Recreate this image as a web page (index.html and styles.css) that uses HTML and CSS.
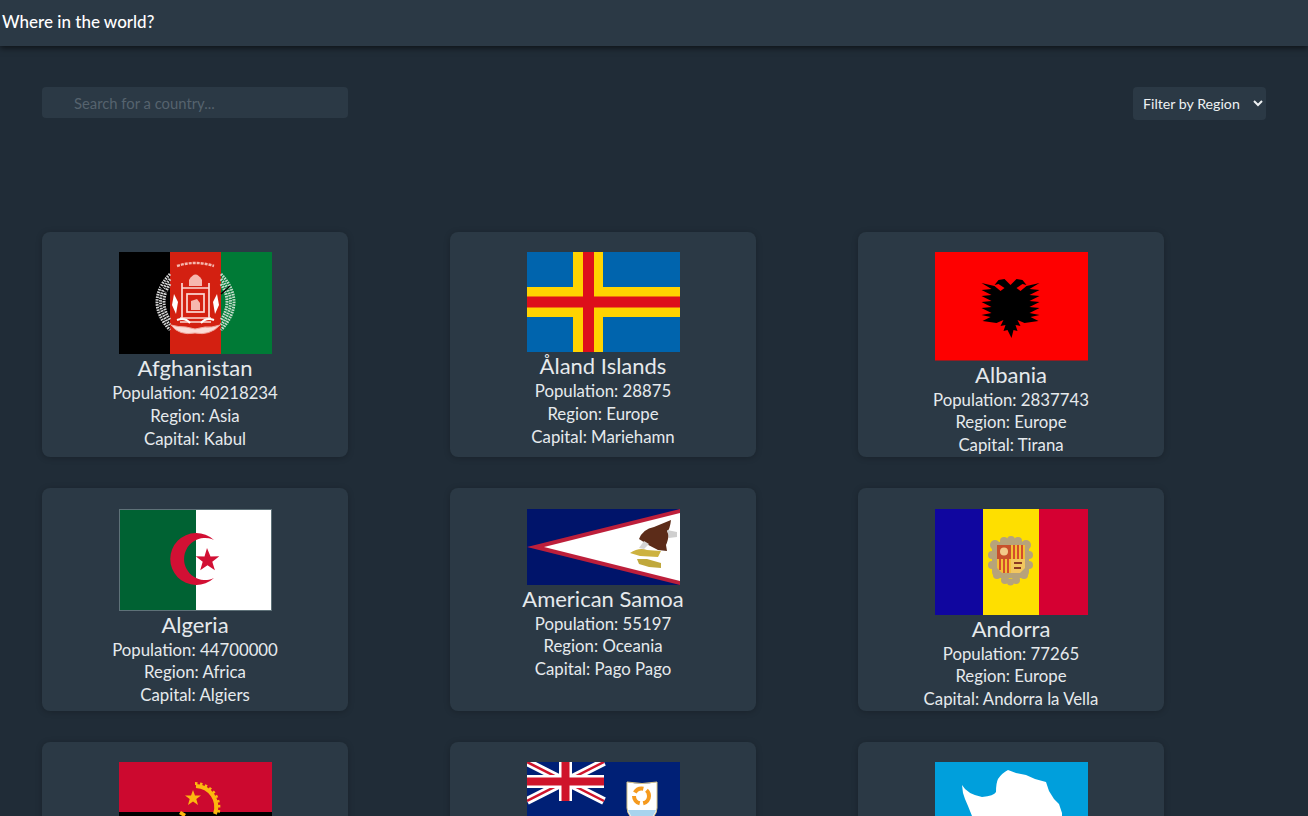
FILE: index.html
```html
<!DOCTYPE html>
<html lang="en">
<head>
    <meta charset="UTF-8">
    <meta name="viewport" content="width=device-width, initial-scale=1.0">
    <title>Where in the world?</title>
    <link rel="stylesheet" href="styles.css">
</head>
<body>
    <header class="topbar">
        <h1>Where in the world?</h1>
    </header>

    <main class="page">
        <div class="controls">
            <input class="search" type="text" placeholder="Search for a country...">
            <select class="region">
                <option>Filter by Region</option>
                <option>Africa</option>
                <option>Americas</option>
                <option>Asia</option>
                <option>Europe</option>
                <option>Oceania</option>
            </select>
        </div>

        <section class="countries">
            <article class="card">
                <svg class="flag" viewBox="0 0 153 102">
                    <rect width="51" height="102" fill="#000"/>
                    <rect x="51" width="51" height="102" fill="#d32011"/>
                    <rect x="102" width="51" height="102" fill="#007a36"/>
                    <g fill="none" stroke-width="3" stroke-dasharray="1.6 1">
                        <g stroke="#d6d6d6">
                            <path d="M51 22Q25 50 51 78"/>
                            <path d="M51 27Q32 50 51 73"/>
                            <path d="M51 32Q39 50 51 68"/>
                        </g>
                        <g stroke="#c3dccb">
                            <path d="M102 22Q128 50 102 78"/>
                            <path d="M102 27Q121 50 102 73"/>
                            <path d="M102 32Q114 50 102 68"/>
                        </g>
                    </g>
                    <path d="M41 34l9 8M111 34l-9 8" stroke="#000" stroke-width="1.500"/>
                    <path d="M58 14q18-6 37 0" fill="none" stroke="#f6b7ae" stroke-width="2.400" stroke-dasharray="3 1"/>
                    <path d="M70 28q6.500-11 13 0v6H70z" fill="#f6b7ae"/>
                    <g fill="none" stroke="#fbd9d4" stroke-width="1.700">
                        <path d="M63 66V31M90 66V31M63 36h27"/>
                        <rect x="68" y="42" width="17" height="18"/>
                        <path d="M61 66h31M61 70h31"/>
                    </g>
                    <path d="M55 42l4 8-2 12-4-9zM98 42l-4 8 2 12 4-9z" fill="#fff"/>
                    <path d="M72 58v-9l6-2 3 4v7z" fill="#f6b7ae"/>
                    <path d="M52 73q8 11 24 8 15 3 25-8-9 3-15 2l-10 2-9-2q-8 0-15-2z" fill="#fbdcd7" stroke="#f2a69c"/>
                    <path d="M58 68q8-3 13 3M95 68q-8-3-13 3" fill="none" stroke="#fff" stroke-width="2"/>
                </svg>
                <h2>Afghanistan</h2>
                <p>Population: 40218234</p>
                <p>Region: Asia</p>
                <p>Capital: Kabul</p>
            </article>

            <article class="card">
                <svg class="flag" viewBox="0 0 153 100">
                    <rect width="153" height="100" fill="#0064ad"/>
                    <path d="M46 0h30v100H46zM0 35h153v30H0z" fill="#ffd300"/>
                    <path d="M56 0h11v100H56zM0 44.500h153v11H0z" fill="#dd0f1b"/>
                </svg>
                <h2>Åland Islands</h2>
                <p>Population: 28875</p>
                <p>Region: Europe</p>
                <p>Capital: Mariehamn</p>
            </article>

            <article class="card">
                <svg class="flag" viewBox="0 0 153 108.500">
                    <rect width="153" height="108.500" fill="#fe0000"/>
                    <path d="M76.500 86l-4-8-4 1 2-6-5 1 3-6-7 3-14-2 8-4-9-2 10-2-10-5 10-1-10-5 10-1-10-5 10-1-10-5 10-1-10-6 13 3 6 5 4-3-6-4-4 1 4-5 6-1 6 6 6-6 6 1 4 5-4-1-6 4 4 3 6-5 13-3-10 6 10 1-10 5 10 1-10 5 10 1-10 5 10 1-10 5 10 2-9 2 8 4-14 2-7-3 3 6-5-1 2 6-4-1z" fill="#000"/>
                </svg>
                <h2>Albania</h2>
                <p>Population: 2837743</p>
                <p>Region: Europe</p>
                <p>Capital: Tirana</p>
            </article>

            <article class="card">
                <svg class="flag" viewBox="0 0 153 102">
                    <rect width="77" height="102" fill="#006233"/>
                    <rect x="77" width="76" height="102" fill="#fff"/>
                    <path d="M95 31a26 26 0 1 0 0 38 21 21 0 1 1 0-38z" fill="#d21034"/>
                    <path d="M88 39l3.500 8.500 8.800-.3-7 5.500 2.600 8.500-7.400-5-7.300 5 2.500-8.500-7-5.500 8.800.3z" fill="#d21034"/>
                    <rect x=".5" y=".5" width="152" height="101" fill="none" stroke="#5e7178"/>
                </svg>
                <h2>Algeria</h2>
                <p>Population: 44700000</p>
                <p>Region: Africa</p>
                <p>Capital: Algiers</p>
            </article>

            <article class="card">
                <svg class="flag" viewBox="0 0 153 76">
                    <rect width="153" height="76" fill="#00146a"/>
                    <path d="M153 0v76L0 38z" fill="#bd1f3b"/>
                    <path d="M153 4v68L17 38z" fill="#fff"/>
                    <path d="M112 30q4-10 15-12l17-7q-1 9-4 12l2 1q-1 8-3 12l1 6-9-1q-9-4-19-11z" fill="#5c2c19"/>
                    <path d="M140 21l10 2v5l-8 1z" fill="#cfcfcf"/>
                    <path d="M112 39l5-7 5 3-5 5z" fill="#d4d4d4"/>
                    <path d="M103 44q9-6 17-3l14 1-3 6-18-1z" fill="#cdb23f"/>
                    <path d="M110 50h10l14 4v5l-12-1-10-3z" fill="#c0a83c"/>
                </svg>
                <h2>American Samoa</h2>
                <p>Population: 55197</p>
                <p>Region: Oceania</p>
                <p>Capital: Pago Pago</p>
            </article>

            <article class="card">
                <svg class="flag" viewBox="0 0 153 106">
                    <rect width="49" height="106" fill="#10069f"/>
                    <rect x="48" width="56" height="106" fill="#fedf00"/>
                    <rect x="104" width="49" height="106" fill="#d50032"/>
                    <g fill="#b7a37a">
                        <rect x="57" y="33" width="37" height="36" rx="6"/>
                        <circle cx="60" cy="36" r="5"/>
                        <circle cx="69" cy="32" r="4"/>
                        <circle cx="76" cy="31" r="4"/>
                        <circle cx="83" cy="32" r="4"/>
                        <circle cx="91" cy="36" r="5"/>
                        <circle cx="57" cy="46" r="4"/>
                        <circle cx="94" cy="46" r="4"/>
                        <circle cx="57" cy="56" r="4"/>
                        <circle cx="94" cy="56" r="4"/>
                        <circle cx="62" cy="66" r="4"/>
                        <circle cx="89" cy="66" r="4"/>
                        <circle cx="70" cy="71" r="4"/>
                        <circle cx="81" cy="71" r="4"/>
                        <circle cx="75.500" cy="73" r="3.500"/>
                    </g>
                    <rect x="62" y="36" width="14" height="14" fill="#c8502b"/>
                    <circle cx="69" cy="42.500" r="4" fill="#f2c98a"/>
                    <rect x="76" y="36" width="14" height="14" fill="#f2c037"/>
                    <path d="M79 36v14M83 36v14M87 36v14" stroke="#d2402b" stroke-width="1.800"/>
                    <path d="M62 50h14v14h-9l-5-5z" fill="#f2c037"/>
                    <path d="M65 50v11M69 50v14M73 50v14" stroke="#d2402b" stroke-width="1.800"/>
                    <path d="M76 50h14v9l-5 5h-9z" fill="#f2c75f"/>
                    <path d="M79 54h8M79 59h7" stroke="#8a3a22" stroke-width="1.800"/>
                </svg>
                <h2>Andorra</h2>
                <p>Population: 77265</p>
                <p>Region: Europe</p>
                <p>Capital: Andorra la Vella</p>
            </article>

            <article class="card">
                <svg class="flag" viewBox="0 0 153 102">
                    <rect width="153" height="50" fill="#cc092f"/>
                    <rect y="50" width="153" height="52"/>
                    <path d="M77 24A21 21 0 0 1 96 52" fill="none" stroke="#fcb80f" stroke-width="4"/>
                    <path d="M76 21.500A24 24 0 0 1 99 52" fill="none" stroke="#fcb80f" stroke-width="3" stroke-dasharray="2.500 2.500"/>
                    <path d="M62 49l5 3-2 3-5-3z" fill="#fcb80f"/>
                    <path d="M74 28l2 5.500h6l-4.700 3.500 1.700 6-5-3.500-5 3.500 1.700-6-4.700-3.500h6z" fill="#fcb80f"/>
                </svg>
            </article>

            <article class="card">
                <svg class="flag" viewBox="0 0 153 76">
                    <rect width="153" height="76" fill="#002076"/>
                    <path d="M0 0l77 39M77 0L0 39" stroke="#fff" stroke-width="8"/>
                    <path d="M0 0l77 39M77 0L0 39" stroke="#cf142b" stroke-width="2.500"/>
                    <path d="M32 0h13v39H32zM0 13h77v13H0z" fill="#fff"/>
                    <path d="M34.500 0h8v39h-8zM0 15.500h77v8H0z" fill="#cf142b"/>
                    <path d="M100 20q15 3 30 0v26q0 10-15 16-15-6-15-16z" fill="#fff" stroke="#d8c58a"/>
                    <circle cx="114.500" cy="34" r="7.500" fill="none" stroke="#f59a1e" stroke-width="4" stroke-dasharray="10 3.500"/>
                    <path d="M101 48h28q-3 9-14 14-11-5-14-14z" fill="#a8d4ee"/>
                </svg>
            </article>

            <article class="card">
                <svg class="flag" viewBox="0 0 153 102">
                    <rect width="153" height="102" fill="#009fdc"/>
                    <path d="M27 23q5 9 20 12 12-1 14-5 0-9 2-13 4-6 10-9l8 3 10 2 9 4 11 3 3 9 5 8 5 5 3 9 0 8-6 8-8 8-14 6-10 4-18 2-14-3-14-6-5-14-1-10-4-10-3-7-2-6z" fill="#fff"/>
                </svg>
            </article>
        </section>
    </main>
</body>
</html>
```

FILE: styles.css
```css
* {
    box-sizing: border-box;
}
html, body {
    height: 100%;
}
body {
    margin: 0;
    overflow: hidden;
    background: #202c37;
    color: #fff;
    font-family: "Lato", "Open Sans", sans-serif;
}
.topbar {
    height: 46px;
    display: flex;
    align-items: center;
    padding: 0 0 3px 2px;
    background: #2b3945;
    box-shadow: 0 2px 6px rgba(0,0,0,0.6);
}
.topbar h1 {
    margin: 0;
    font-size: 17px;
    font-weight: 500;
}
.page {
    padding: 41px 42px 0;
}
.controls {
    display: flex;
    justify-content: space-between;
    align-items: flex-start;
    margin-bottom: 112px;
}
.search {
    width: 306px;
    height: 31px;
    padding: 0 32px;
    border: none;
    border-radius: 4px;
    background: #2b3945;
    color: #fff;
    font-family: inherit;
    font-size: 14.8px;
}
.search::placeholder {
    color: #56636e;
}
.region {
    width: 133px;
    height: 33px;
    padding: 0 6px;
    border: none;
    border-radius: 4px;
    background: #2b3945;
    color: #eef1f3;
    font-family: inherit;
    font-size: 14.2px;
}
.countries {
    display: grid;
    grid-template-columns: repeat(3, 306px);
    column-gap: 102px;
    row-gap: 31px;
}
.card {
    padding: 20.4px 0 0.6px;
    border-radius: 8px;
    background: #2b3945;
    box-shadow: 0 1px 6px rgba(0,0,0,0.22);
    text-align: center;
    color: #e6eaed;
}
.flag {
    display: block;
    width: 153px;
    margin: 0 auto;
}
.card h2 {
    margin: 0;
    font-size: 22px;
    line-height: 28px;
    font-weight: 400;
}
.card p {
    margin: 0;
    font-size: 16.8px;
    line-height: 22.6px;
}
```
